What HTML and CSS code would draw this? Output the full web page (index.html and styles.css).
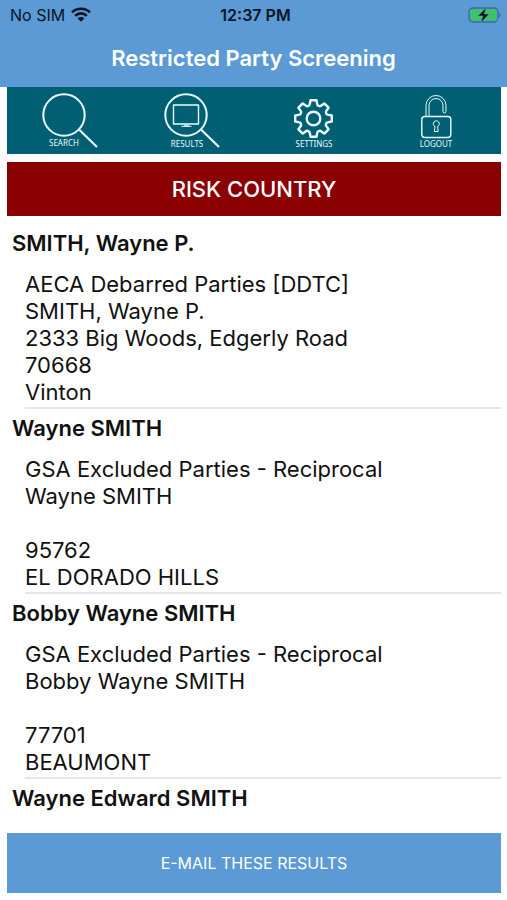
FILE: index.html
```html
<!DOCTYPE html>
<html lang="en">
<head>
  <meta charset="UTF-8" />
  <meta name="viewport" content="width=device-width, initial-scale=1.0" />
  <title>Restricted Party Screening</title>
  <link rel="stylesheet" href="styles.css">
</head>
<body>
  <header>
    <div class="status">
      <div class="carrier">
        <span>No SIM</span>
        <svg width="20" height="15" viewBox="0 0 20 15">
          <g fill="none" stroke="#0a1424" stroke-width="2.6">
            <path d="M1 5.4a12.8 12.8 0 0 1 18 0" />
            <path d="M4.2 8.8a8.2 8.2 0 0 1 11.6 0" />
          </g>
          <path d="M6.6 11.4a4.8 4.8 0 0 1 6.8 0L10 14.8z" fill="#0a1424" />
        </svg>
      </div>
      <div class="time">12:37 PM</div>
      <svg class="battery" width="33" height="18" viewBox="0 0 33 18">
        <rect x="1" y="2" width="29" height="14" rx="4" fill="#5b9ad5" stroke="#3a6c9c" stroke-width="1.3" />
        <rect x="2.5" y="3.5" width="26" height="11" rx="2.5" fill="#3cc561" />
        <path d="M31.4 7v4.4q1.4-.6 1.4-2.2t-1.4-2.2z" fill="#3a6c9c" />
        <path d="M18.4 1.5L9.8 10h5l-2 6.8L21.2 8h-5z" fill="#0a0f14" stroke="#5b9ad5" stroke-width=".6" />
      </svg>
    </div>
    <h1>Restricted Party Screening</h1>
  </header>

  <nav>
    <a href="#search">
      <svg width="56" height="59" viewBox="0 0 56 59">
        <circle cx="22" cy="24" r="20.7" stroke-width="2" />
        <path d="M37.5 39L55 56" stroke-width="2.2" />
        <text x="22" y="55">SEARCH</text>
      </svg>
    </a>
    <a href="#results">
      <svg width="56" height="59" viewBox="0 0 56 59">
        <circle cx="22" cy="24" r="20.7" stroke-width="2" />
        <path d="M37.5 39L55 56" stroke-width="2.2" />
        <rect x="9.5" y="14" width="25" height="19" stroke-width="1.4" />
        <path d="M20 34.2h5M17.5 35.4h10" />
        <text x="23" y="56">RESULTS</text>
      </svg>
    </a>
    <a href="#settings">
      <svg width="56" height="59" viewBox="0 0 56 59">
        <g transform="translate(27.5 27.5)" stroke-width="2.4">
          <path d="M-3-18.3H3L3.6-15A2.6 2.6 0 0 0 8.1-13.2L10.8-15.1 15.1-10.8 13.2-8.1A2.6 2.6 0 0 0 15-3.6L18.3-3V3L15 3.6A2.6 2.6 0 0 0 13.2 8.1L15.1 10.8 10.8 15.1 8.1 13.2A2.6 2.6 0 0 0 3.6 15L3 18.3H-3L-3.6 15A2.6 2.6 0 0 0-8.1 13.2L-10.8 15.1-15.1 10.8-13.2 8.1A2.6 2.6 0 0 0-15 3.6L-18.3 3V-3L-15-3.6A2.6 2.6 0 0 0-13.2-8.1L-15.1-10.8-10.8-15.1-8.1-13.2A2.6 2.6 0 0 0-3.6-15z" />
          <circle r="6.8" />
        </g>
        <text x="28" y="56">SETTINGS</text>
      </svg>
    </a>
    <a href="#logout">
      <svg width="56" height="59" viewBox="0 0 56 59">
        <rect x="13.8" y="25.5" width="29" height="21" rx="3" stroke-width="1.4" />
        <path d="M18 25.5v-11a10 10 0 0 1 20 0v6a1.5 1.5 0 0 1-3 0v-6a7 7 0 0 0-14 0v11" />
        <path d="M27 35.5a3 3 0 1 1 2.6 0l.6 5h-3.8z" />
        <text x="28" y="56">LOGOUT</text>
      </svg>
    </a>
  </nav>

  <div class="risk">RISK COUNTRY</div>

  <main>
    <section class="party">
      <h2>SMITH, Wayne P.</h2>
      <p>AECA Debarred Parties [DDTC]<br>SMITH, Wayne P.<br>2333 Big Woods, Edgerly Road<br>70668<br>Vinton</p>
    </section>
    <section class="party">
      <h2>Wayne SMITH</h2>
      <p>GSA Excluded Parties - Reciprocal<br>Wayne SMITH<br><br>95762<br>EL DORADO HILLS</p>
    </section>
    <section class="party">
      <h2>Bobby Wayne SMITH</h2>
      <p>GSA Excluded Parties - Reciprocal<br>Bobby Wayne SMITH<br><br>77701<br>BEAUMONT</p>
    </section>
    <section class="party">
      <h2>Wayne Edward SMITH</h2>
    </section>
  </main>

  <button class="email-btn" type="button">E-MAIL THESE RESULTS</button>
</body>
</html>
```
FILE: styles.css
```css
* { box-sizing: border-box; margin: 0; padding: 0; }
body {
  display: flex; flex-direction: column;
  min-height: 100vh;
  font-family: Inter, 'Liberation Sans', sans-serif;
  background-color: #fff; color: #111;
}
header {
  height: 87px;
  background-color: #5b9ad5;
}
.status {
  display: grid; grid-template-columns: 1fr auto 1fr;
  align-items: center;
  height: 29px; padding: 0 6px 0 10px;
  font-size: 16px; color: #0a1424;
}
.carrier {
  display: flex; align-items: center;
  gap: 6px;
}
.time { font-weight: 600; }
.battery { justify-self: end; }
h1 {
  color: #fff; text-align: center;
  font-size: 22px; font-weight: 600;
  line-height: 58px;
}
nav {
  display: grid; grid-template-columns: repeat(4, 1fr);
  margin: 0 6px 8px 7px; padding: 0 4px 0 2px;
  height: 67px;
  background-color: #005f73;
}
nav a {
  display: flex; justify-content: center;
  padding-top: 4px;
}
nav svg {
  fill: none; stroke: #e8fbff;
  stroke-linejoin: round;
}
nav text {
  fill: #e8fbff; stroke: none;
  font-family: 'Noto Sans', sans-serif; font-size: 8px;
  text-anchor: middle;
}
.risk {
  margin: 0 6px 8px 7px;
  background-color: #8b0000; color: #fff;
  font-size: 22px; font-weight: 500;
  line-height: 54px; text-align: center;
}
main {
  flex: 1;
  padding: 0 6px 0 12px;
}
.party h2 {
  font-size: 22px; font-weight: 600;
  line-height: 38px;
}
.party p {
  margin-left: 13px; padding: 9px 0 1px;
  border-bottom: 2px solid #e6e6e6;
  font-size: 22px; line-height: 27px;
}
.email-btn {
  margin: 0 6px 7px 7px; height: 60px;
  background-color: #5b9ad5; color: #fff;
  font-family: inherit; font-size: 16px;
  border: none; cursor: pointer;
}
```
